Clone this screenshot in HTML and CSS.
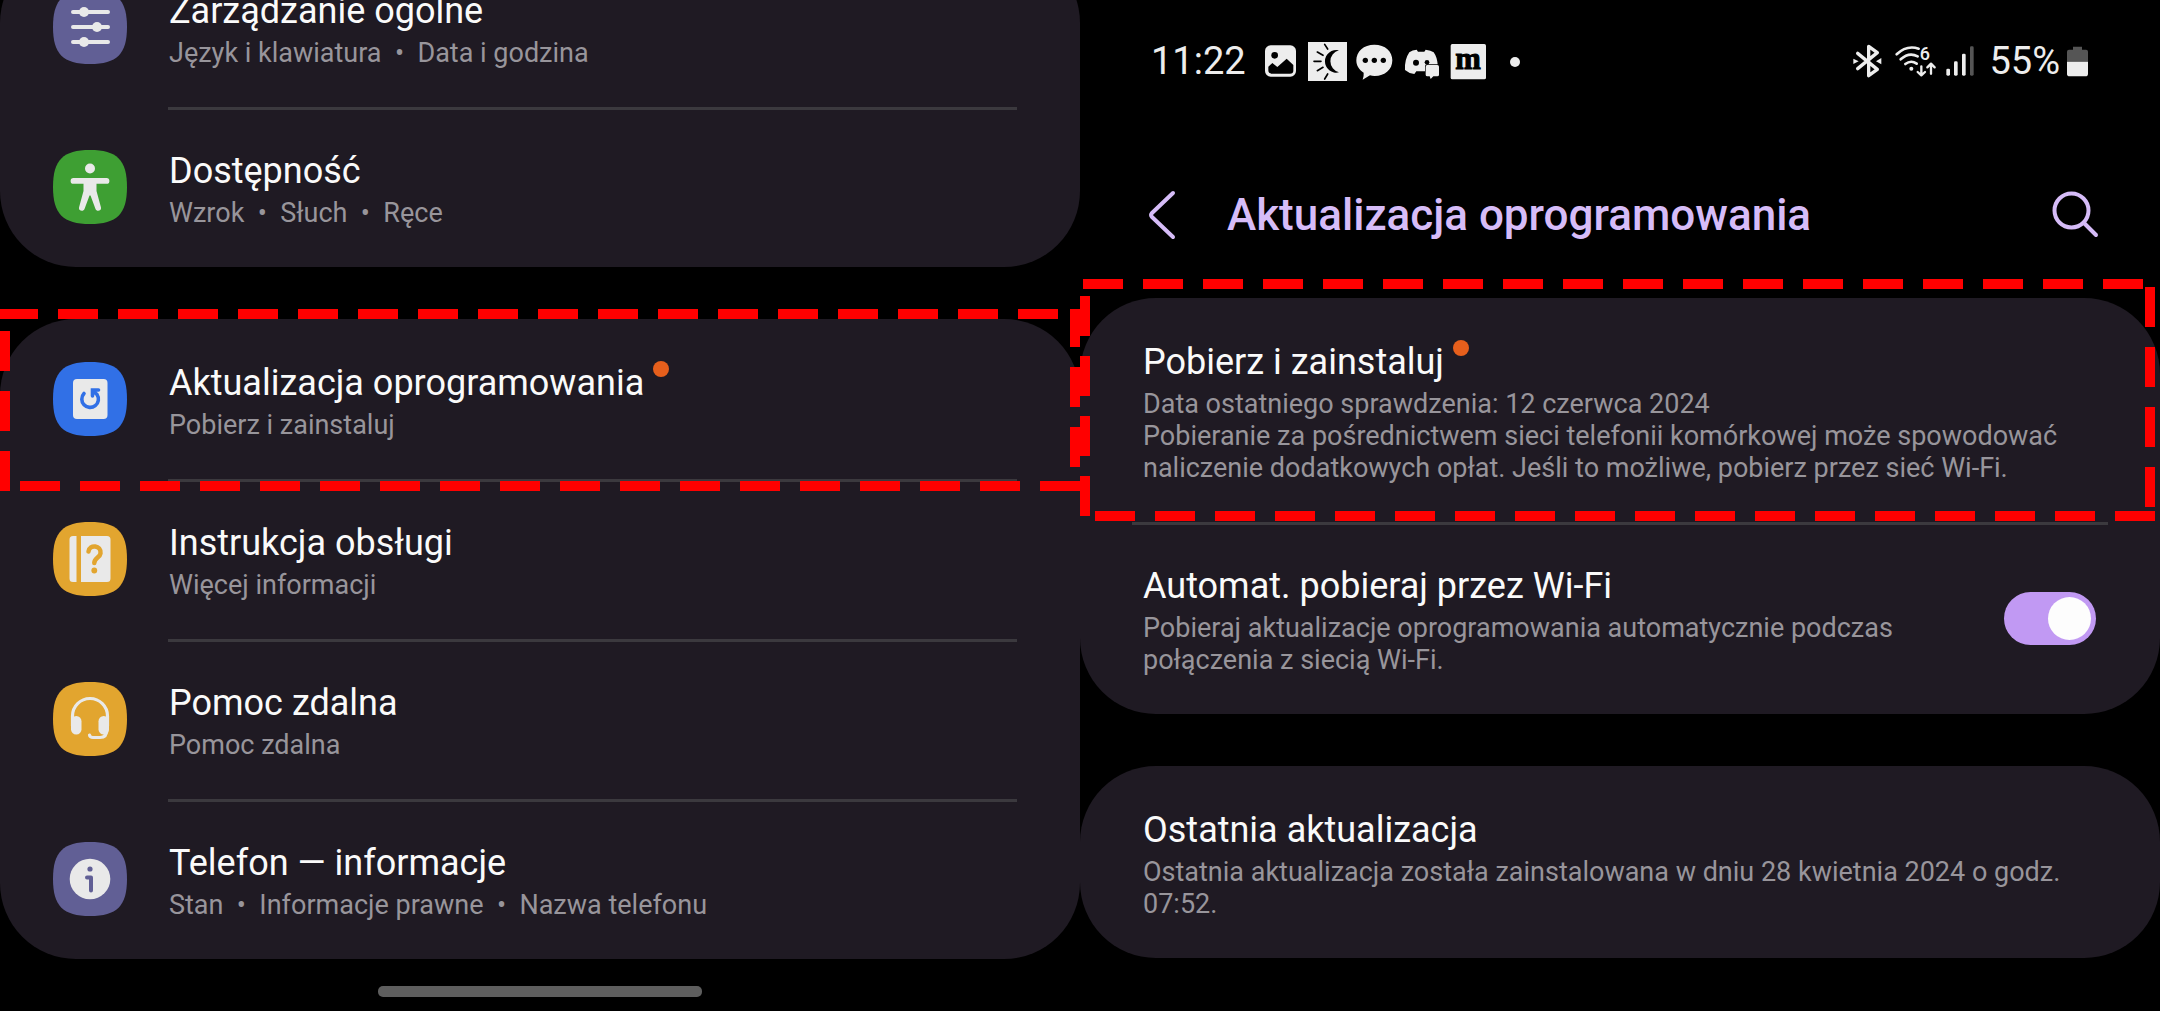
FILE: index.html
```html
<!DOCTYPE html>
<html lang="pl">
<head>
<meta charset="utf-8">
<title>Ustawienia – Aktualizacja oprogramowania</title>
<link rel="stylesheet" href="styles.css">
</head>
<body>
<main class="screens">
  <section class="screen screen-list" aria-label="Ustawienia">
    <nav class="card">
      <a class="row" href="#ogolne">
        <svg class="row-icon" viewBox="0 0 74 74" aria-hidden="true"><path fill="#615f95" d="M37 0C64 0 74 10 74 37S64 74 37 74 0 64 0 37 10 0 37 0Z"/><g stroke="#e9e9e9" stroke-width="4" stroke-linecap="round"><path d="M20 22H55M20 37H55M20 52H55"/></g><g fill="#e9e9e9"><circle cx="31" cy="22" r="5"/><circle cx="44" cy="37" r="5"/><circle cx="31" cy="52" r="5"/></g></svg>
        <span class="row-text"><span class="title">Zarządzanie ogólne</span><span class="sub">Język i klawiatura&nbsp; •&nbsp; Data i godzina</span></span>
      </a>
      <a class="row" href="#dostepnosc">
        <svg class="row-icon" viewBox="0 0 74 74" aria-hidden="true"><path fill="#3e9f33" d="M37 0C64 0 74 10 74 37S64 74 37 74 0 64 0 37 10 0 37 0Z"/><g fill="#e9e9e9"><circle cx="37" cy="18.500" r="5"/><path d="M20.500 28H53.500A2.900 2.900 0 0 1 53.500 33.800H43.500V41L48 57.500C48.700 61 43.500 62 42.500 59L37.500 45.500H36.500L31.500 59C30.500 62 25.300 61 26 57.500L30.500 41V33.800H20.500A2.900 2.900 0 0 1 20.500 28Z"/></g></svg>
        <span class="row-text"><span class="title">Dostępność</span><span class="sub">Wzrok&nbsp; •&nbsp; Słuch&nbsp; •&nbsp; Ręce</span></span>
      </a>
    </nav>
    <nav class="card">
      <a class="row marked marked-list" href="#aktualizacja">
        <svg class="row-icon" viewBox="0 0 74 74" aria-hidden="true"><path fill="#3170e6" d="M37 0C64 0 74 10 74 37S64 74 37 74 0 64 0 37 10 0 37 0Z"/><rect x="20" y="17" width="34.500" height="40" rx="4" fill="#e9e9e9"/><path d="M31 31.500A8.300 8.300 0 1 0 44 32.500L40 29M39.500 34V28H45.500" fill="none" stroke="#3170e6" stroke-width="3.600" stroke-linecap="round"/></svg>
        <span class="row-text"><span class="title">Aktualizacja oprogramowania<i class="badge"></i></span><span class="sub">Pobierz i zainstaluj</span></span>
      </a>
      <a class="row" href="#instrukcja">
        <svg class="row-icon" viewBox="0 0 74 74" aria-hidden="true"><path fill="#e2a52f" d="M37 0C64 0 74 10 74 37S64 74 37 74 0 64 0 37 10 0 37 0Z"/><g fill="#e9e9e9"><path d="M23.500 14V60H20A3.500 3.500 0 0 1 16.500 56.500V17.500A3.500 3.500 0 0 1 20 14Z"/><path d="M28 14H54A3.500 3.500 0 0 1 57.500 17.500V56.500A3.500 3.500 0 0 1 54 60H28Z"/></g><path d="M35.500 29.500C36.500 22 48.500 23 47.500 31.500C47 35.500 41.300 36 41.300 41" fill="none" stroke="#e2a52f" stroke-width="4.500" stroke-linecap="round"/><circle cx="41.300" cy="48.500" r="2.900" fill="#e2a52f"/></svg>
        <span class="row-text"><span class="title">Instrukcja obsługi</span><span class="sub">Więcej informacji</span></span>
      </a>
      <a class="row" href="#pomoc">
        <svg class="row-icon" viewBox="0 0 74 74" aria-hidden="true"><path fill="#e2a52f" d="M37 0C64 0 74 10 74 37S64 74 37 74 0 64 0 37 10 0 37 0Z"/><path d="M19.500 44V34A17.500 17.500 0 0 1 54.500 34V44M54 47C54 53 51 55.500 47 55.500H40Q37 55.500 36.500 53" fill="none" stroke="#e9e9e9" stroke-width="3.200" stroke-linecap="round"/><rect x="18" y="34" width="10.500" height="18.500" rx="5.200" fill="#e9e9e9"/><rect x="45.500" y="34" width="10.500" height="18.500" rx="5.200" fill="#e9e9e9"/></svg>
        <span class="row-text"><span class="title">Pomoc zdalna</span><span class="sub">Pomoc zdalna</span></span>
      </a>
      <a class="row" href="#telefon">
        <svg class="row-icon" viewBox="0 0 74 74" aria-hidden="true"><path fill="#615f95" d="M37 0C64 0 74 10 74 37S64 74 37 74 0 64 0 37 10 0 37 0Z"/><circle cx="37" cy="37" r="20.300" fill="#e9e9e9"/><circle cx="37" cy="27" r="2.600" fill="#615f95"/><path d="M34 35.500H38V48.500" fill="none" stroke="#615f95" stroke-width="4" stroke-linecap="round" stroke-linejoin="round"/></svg>
        <span class="row-text"><span class="title">Telefon — informacje</span><span class="sub">Stan&nbsp; •&nbsp; Informacje prawne&nbsp; •&nbsp; Nazwa telefonu</span></span>
      </a>
    </nav>
    <div class="home-bar"></div>
  </section>

  <section class="screen" aria-label="Aktualizacja oprogramowania">
    <div class="status">
      <div class="status-side">
        <span class="clock clock-time">11:22</span>
        <svg class="glyph" viewBox="363 34 117 117" aria-hidden="true"><rect x="375" y="44" width="93" height="94" rx="17" fill="#ededed"/><circle cx="404" cy="74" r="10"/><path d="M385 108L397 97L412 109L440 84L460 103V120Q460 129 450 129H395Q385 129 385 119Z"/></svg>
        <svg class="glyph" viewBox="504 36 117 117" aria-hidden="true"><path fill="#ededed" d="M504 36H621V153H504Z"/><path d="M597 61A34 34 0 1 0 597 127A34 34 0 0 1 597 61Z"/><g stroke="#000" stroke-width="5" stroke-linecap="round"><path d="M554 43L563 57M532 66L549 76M522 94H543M532 122L549 112M554 147L563 132"/></g></svg>
        <svg class="glyph" viewBox="645 34 117 117" aria-hidden="true"><path fill="#ededed" d="M703 42C736 42 757 62 757 89C757 117 735 136 704 136Q696 136 690 134L668 147Q672 137 671 126C657 117 649 105 649 89C649 62 671 42 703 42Z"/><circle cx="676" cy="89" r="8"/><circle cx="703" cy="89" r="8"/><circle cx="730" cy="89" r="8"/></svg>
        <svg class="glyph" viewBox="786 34 117 117" aria-hidden="true"><path fill="#ededed" d="M830 57L834 63H853L857 57Q873 59 881 65Q891 79 893 101H861Q855 101 855 107V122H829L823 130Q806 128 795 118Q793 87 808 65Q817 58 830 57Z"/><circle cx="828" cy="96" r="9"/><circle cx="861" cy="95" r="7"/><path fill="#ededed" d="M862 103H892Q897 103 897 108V132Q897 137 892 137H880L872 145L869 137H862Q857 137 857 132V108Q857 103 862 103Z"/></svg>
        <svg class="glyph" viewBox="927 34 117 117" aria-hidden="true"><rect x="932" y="40" width="106" height="106" rx="5" fill="#ededed"/><text class="tile-letter" x="984" y="114" text-anchor="middle">m</text></svg>
        <svg class="glyph" viewBox="1068 34 117 117" aria-hidden="true"><circle cx="1125" cy="94" r="15" fill="#ededed"/></svg>
      </div>
      <div class="status-side">
        <svg class="glyph glyph-bt" viewBox="64 34 102 117" aria-hidden="true"><path d="M84 68L143 116L117 135V47L143 66L84 114" fill="none" stroke="#ededed" stroke-width="10" stroke-linecap="round" stroke-linejoin="round"/><path d="M71 84L87 92L71 100ZM155 82L139 92L155 101Z" fill="#ededed"/></svg>
        <svg class="glyph glyph-wifi" viewBox="192 34 132 117" aria-hidden="true"><g fill="none" stroke="#ededed" stroke-width="8" stroke-linecap="round" stroke-linejoin="round"><path d="M203 71Q233 42 269 54M215 86Q240 63 266 77M229 100Q246 87 263 99"/><path stroke-width="7" d="M277 107V133M266 124L277 134L288 124M306 129V101M295 110L306 99L317 110"/></g><circle cx="247" cy="114" r="6" fill="#ededed"/><text class="wifi-gen" x="272" y="88">6</text></svg>
        <svg class="glyph glyph-signal" viewBox="345 34 108 117" aria-hidden="true"><g fill="#ededed"><rect x="349" y="114" width="11" height="21" rx="4"/><rect x="372" y="92" width="11" height="43" rx="4"/><rect x="396" y="69" width="11" height="66" rx="4"/></g><rect x="420" y="47" width="11" height="88" rx="4" fill="#555"/></svg>
        <span class="battery"><span class="clock">55%</span><svg class="glyph glyph-battery" viewBox="705 34 72 117" aria-hidden="true"><path fill="#555" d="M729 48H756V57H768Q774 57 774 63V93H711V63Q711 57 717 57H729Z"/><path fill="#ededed" d="M711 93H774V129Q774 137 766 137H719Q711 137 711 129Z"/></svg></span>
      </div>
    </div>
    <header class="bar">
      <button class="icon-button" type="button" aria-label="Wstecz"><svg class="back" viewBox="0 0 30 50"><path d="M26 3L5 23Q3 25 5 27L26 47" fill="none" stroke="#d6bcf8" stroke-width="4" stroke-linecap="round" stroke-linejoin="round"/></svg></button>
      <h1 class="heading">Aktualizacja oprogramowania</h1>
      <button class="icon-button" type="button" aria-label="Szukaj"><svg class="search" viewBox="0 0 48 48"><g fill="none" stroke="#d6bcf8" stroke-width="4" stroke-linecap="round"><circle cx="19.500" cy="19.500" r="17"/><path d="M32 32L44 44"/></g></svg></button>
    </header>
    <div class="card">
      <a class="row row-wide marked marked-detail" href="#pobierz">
        <span class="row-text"><span class="title">Pobierz i zainstaluj<i class="badge"></i></span><span class="sub">Data ostatniego sprawdzenia: 12 czerwca 2024<br>Pobieranie za pośrednictwem sieci telefonii komórkowej może spowodować naliczenie dodatkowych opłat. Jeśli to możliwe, pobierz przez sieć Wi-Fi.</span></span>
      </a>
      <label class="row row-wide row-switch" for="auto-wifi">
        <span class="row-text"><span class="title">Automat. pobieraj przez Wi-Fi</span><span class="sub">Pobieraj aktualizacje oprogramowania automatycznie podczas połączenia z siecią Wi-Fi.</span></span>
        <input class="switch" type="checkbox" id="auto-wifi" checked>
      </label>
    </div>
    <div class="card">
      <a class="row row-wide" href="#ostatnia">
        <span class="row-text"><span class="title">Ostatnia aktualizacja</span><span class="sub">Ostatnia aktualizacja została zainstalowana w dniu 28 kwietnia 2024 o godz. 07:52.</span></span>
      </a>
    </div>
  </section>
</main>
</body>
</html>
```
FILE: styles.css
```css
* {
  box-sizing: border-box;
}

body {
  margin: 0;
  background: #000;
  color: #fafafa;
  font-family: Roboto, "Liberation Sans", sans-serif;
}

.screens {
  display: grid;
  grid-template-columns: 1fr 1fr;
  min-height: 100vh;
  overflow: hidden;
}

.screen {
  display: flex;
  flex-direction: column;
  min-width: 0;
}

/* The list is scrolled, so its first card starts above the window. */
.screen-list {
  margin-top: -53px;
}

.card {
  border-radius: 76px;
  background: #1f1a23;
}

.card + .card {
  margin-top: 52px;
}

.row {
  position: relative;
  display: flex;
  align-items: flex-start;
  gap: 42px;
  padding: 43px 63px 38px 53px;
  color: inherit;
  text-decoration: none;
}

.row-wide {
  padding-left: 63px;
  padding-right: 64px;
}

.row + .row::before {
  content: "";
  position: absolute;
  top: 0;
  left: 168px;
  right: 63px;
  height: 3px;
  background: #3b393e;
}

.row-wide + .row-wide::before {
  left: 52px;
  right: 52px;
}

.row-icon {
  flex: none;
  width: 74px;
  height: 74px;
}

.row-text {
  flex: 1;
  min-width: 0;
}

.title,
.sub {
  display: block;
}

.title {
  margin-bottom: 5px;
  font-size: 36px;
  line-height: 42px;
}

.sub {
  color: #98959b;
  font-size: 27px;
  line-height: 32px;
}

.badge {
  display: inline-block;
  width: 16px;
  height: 16px;
  margin: -4px 0 0 9px;
  border-radius: 50%;
  background: #e65f1c;
  vertical-align: 18px;
}

.row-switch {
  align-items: center;
}

.row-switch .row-text {
  padding-right: 40px;
}

.switch {
  appearance: none;
  flex: none;
  width: 92px;
  height: 53px;
  margin: 0 0 5px;
  padding: 5px;
  border-radius: 27px;
  background: #666;
}

.switch::before {
  content: "";
  display: block;
  width: 43px;
  height: 43px;
  border-radius: 50%;
  background: #fdfdfd;
}

.switch:checked {
  background: #c199f3;
}

.switch:checked::before {
  margin-left: auto;
}

/* Dashed callout frames drawn over the highlighted rows. */
.marked::after {
  content: "";
  position: absolute;
  z-index: 1;
  pointer-events: none;
  background-position: top, bottom, left, right;
  background-size: 100% 10px, 100% 10px, 10px 100%, 10px 100%;
  background-repeat: no-repeat;
}

.marked-list::after {
  inset: -10px 0 -12px;
  background-image:
    repeating-linear-gradient(90deg, #f00 0 38px, transparent 38px 58px, #f00 58px 60px),
    repeating-linear-gradient(270deg, #f00 0 40px, transparent 40px 60px),
    repeating-linear-gradient(0deg, #f00 0 40px, transparent 40px 60px),
    repeating-linear-gradient(180deg, #f00 0 38px, transparent 38px 58px, #f00 58px 60px);
}

.marked-detail::after {
  inset: -19px 5px 1px 0;
  background-image:
    repeating-linear-gradient(90deg, transparent 0 3px, #f00 3px 43px, transparent 43px 60px),
    repeating-linear-gradient(270deg, #f00 0 40px, transparent 40px 60px),
    repeating-linear-gradient(180deg, transparent 0 17px, #f00 17px 57px, transparent 57px 60px),
    repeating-linear-gradient(180deg, transparent 0 8px, #f00 8px 48px, transparent 48px 60px);
}

.home-bar {
  align-self: center;
  width: 30%;
  height: 11px;
  margin: 27px 0 14px;
  border-radius: 5px;
  background: #5e5e5e;
}

.status {
  display: flex;
  justify-content: space-between;
  align-items: center;
  padding: 38px 71px 0;
}

.status-side,
.battery {
  display: flex;
  align-items: center;
  gap: 8px;
}

.battery {
  gap: 5px;
}

.clock {
  color: #ededed;
  font-size: 38px;
  line-height: 46px;
}

.clock-time {
  margin-right: 7px;
}

.glyph {
  flex: none;
  width: 39px;
  height: 39px;
}

.glyph-bt {
  width: 34px;
}

.glyph-wifi {
  width: 44px;
}

.glyph-signal {
  width: 36px;
}

.glyph-battery {
  width: 24px;
}

.tile-letter {
  stroke: #000;
  stroke-width: 3px;
  font: bold 92px "Liberation Serif", serif;
}

.wifi-gen {
  fill: #ededed;
  font: 500 54px Roboto, sans-serif;
}

.bar {
  display: flex;
  align-items: center;
  height: 214px;
  padding: 48px 60px 0 67px;
}

.icon-button {
  display: flex;
  padding: 0;
  border: 0;
  background: none;
}

.back {
  width: 30px;
  height: 50px;
}

.search {
  width: 48px;
  height: 48px;
}

.heading {
  flex: 1;
  margin: 0 0 0 50px;
  color: #d6bcf8;
  font-size: 44px;
  font-weight: 500;
  line-height: 54px;
}
```
